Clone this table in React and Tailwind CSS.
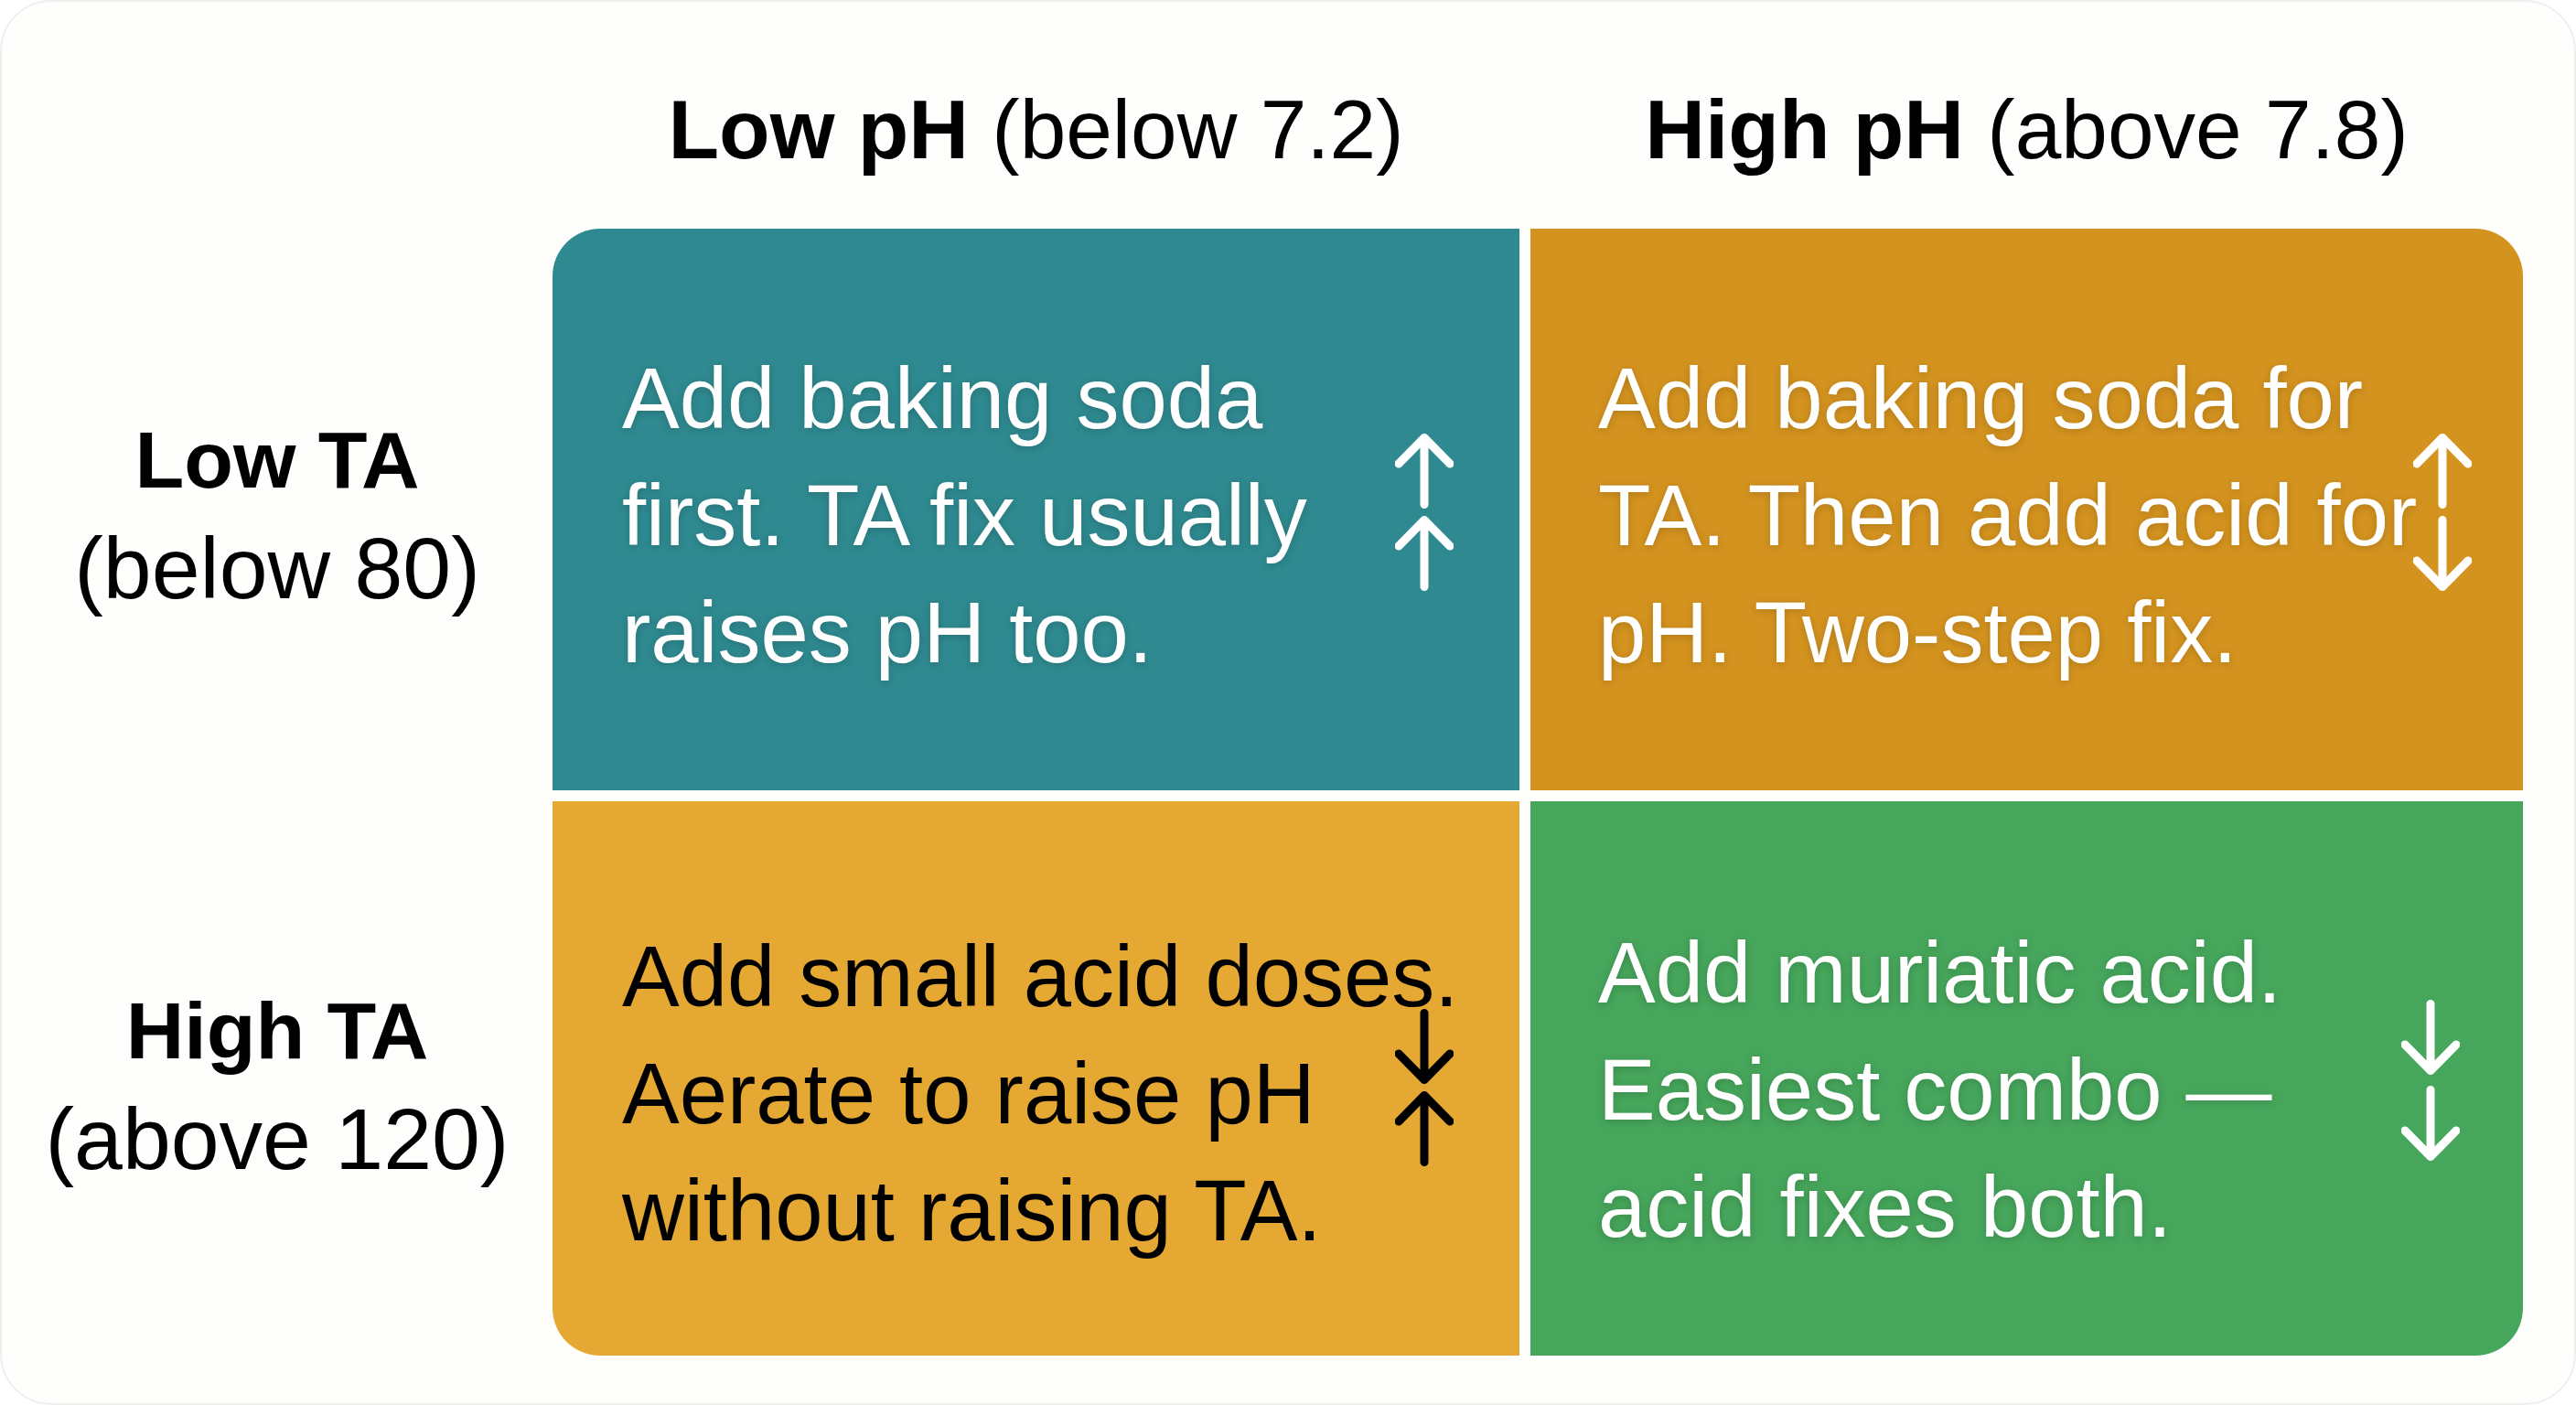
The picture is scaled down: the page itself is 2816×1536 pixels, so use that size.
import React from 'react';

const FONT = "font-['Liberation_Sans',Arial,sans-serif]";

const Arrow = ({ dir = 'up', color = '#ffffff' }) => (
  <svg width="64" height="82" viewBox="0 0 64 82" fill="none">
    {dir === 'up' ? (
      <path d="M32 77.5V4.5M4 33L32 4.5L60 33" stroke={color} strokeWidth="9" strokeLinecap="round" strokeLinejoin="round" />
    ) : (
      <path d="M32 4.5V77.5M4 49L32 77.5L60 49" stroke={color} strokeWidth="9" strokeLinecap="round" strokeLinejoin="round" />
    )}
  </svg>
);

const cells = [
  {
    bg: 'bg-[#2e8a90]',
    corner: 'rounded-tl-[52px]',
    text: 'text-white [text-shadow:0_2px_8px_rgba(0,0,0,0.18)]',
    pad: 'pt-[14px]',
    lines: ['Add baking soda', 'first. TA fix usually', 'raises pH too.'],
    arrows: ['up', 'up'],
    arrowColor: '#ffffff',
    arrowPos: 'right-[72px] top-[224px] gap-[8px]',
  },
  {
    bg: 'bg-[#d4931f]',
    corner: 'rounded-tr-[52px]',
    text: 'text-white [text-shadow:0_2px_8px_rgba(0,0,0,0.18)]',
    pad: 'pt-[14px]',
    lines: ['Add baking soda for', 'TA. Then add acid for', 'pH. Two-step fix.'],
    arrows: ['up', 'down'],
    arrowColor: '#ffffff',
    arrowPos: 'right-[56px] top-[224px] gap-[8px]',
  },
  {
    bg: 'bg-[#e5a833]',
    corner: 'rounded-bl-[52px]',
    text: 'text-black',
    pad: 'pt-[34px]',
    lines: ['Add small acid doses.', 'Aerate to raise pH', 'without raising TA.'],
    arrows: ['down', 'up'],
    arrowColor: '#000000',
    arrowPos: 'right-[72px] top-[227px] gap-[8px]',
  },
  {
    bg: 'bg-[#46a65b]',
    corner: 'rounded-br-[52px]',
    text: 'text-white [text-shadow:0_2px_8px_rgba(0,0,0,0.18)]',
    pad: 'pt-[26px]',
    lines: ['Add muriatic acid.', 'Easiest combo —', 'acid fixes both.'],
    arrows: ['down', 'down'],
    arrowColor: '#ffffff',
    arrowPos: 'right-[69px] top-[217px] gap-[12px]',
  },
];

const Cell = ({ cell, padLeft }) => (
  <div className={`relative flex flex-col justify-center ${cell.bg} ${cell.corner} ${cell.pad} ${padLeft}`}>
    <div className={`text-[94px] leading-[128px] whitespace-nowrap ${cell.text}`}>
      {cell.lines.map((l) => (
        <div key={l}>{l}</div>
      ))}
    </div>
    <div className={`absolute flex flex-col ${cell.arrowPos}`}>
      {cell.arrows.map((d, i) => (
        <Arrow key={i} dir={d} color={cell.arrowColor} />
      ))}
    </div>
  </div>
);

const RowLabel = ({ title, sub, pad }) => (
  <div className={`flex flex-col items-center justify-center pl-[12px] text-black leading-[119px] ${pad}`}>
    <div className="font-bold text-[88px]">{title}</div>
    <div className="text-[95px]">{sub}</div>
  </div>
);

const ColHeader = ({ bold, rest }) => (
  <div className="flex justify-center pt-[85px] text-black text-[91px] leading-[1.2] whitespace-nowrap">
    <span className="font-bold">{bold}</span>
    <span className="whitespace-pre"> {rest}</span>
  </div>
);

export default function App() {
  return (
    <div className={`w-[2816px] h-[1536px] bg-white ${FONT}`}>
      <div className="w-full h-full rounded-[56px] border-2 border-[#efefee] bg-[#fefefd] overflow-hidden">
        <div className="grid grid-cols-[590px_1057px_1085px] grid-rows-[236px_614px_606px] gap-[12px]">
          <div />
          <ColHeader bold="Low pH" rest="(below 7.2)" />
          <ColHeader bold="High pH" rest="(above 7.8)" />

          <RowLabel title="Low TA" sub="(below 80)" pad="pt-[10px]" />
          <Cell cell={cells[0]} padLeft="pl-[76px]" />
          <Cell cell={cells[1]} padLeft="pl-[74px]" />

          <RowLabel title="High TA" sub="(above 120)" pad="pt-[14px]" />
          <Cell cell={cells[2]} padLeft="pl-[76px]" />
          <Cell cell={cells[3]} padLeft="pl-[74px]" />
        </div>
      </div>
    </div>
  );
}
